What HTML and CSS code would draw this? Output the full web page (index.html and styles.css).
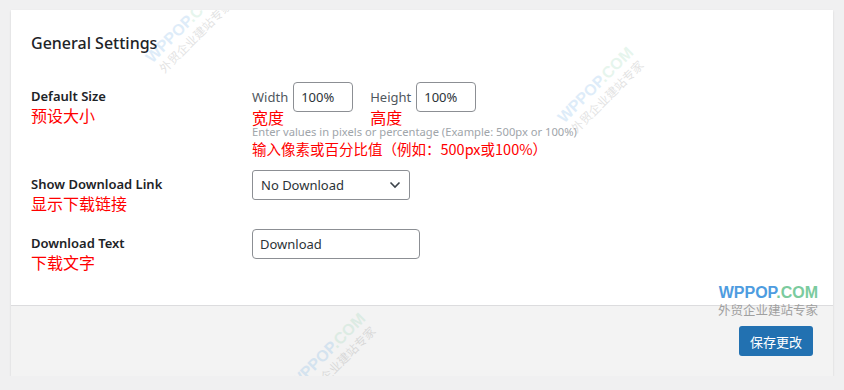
FILE: index.html
```html
<!DOCTYPE html>
<html lang="zh-CN">
<head>
<meta charset="utf-8">
<title>General Settings</title>
<link rel="stylesheet" href="styles.css">
</head>
<body>
<div class="card">
  <div class="card-body">
    <h2 class="title">General Settings</h2>
    <div class="form">
      <div class="row row-size">
        <div class="label">Default Size<span class="cn cn-label">预设大小</span></div>
        <div class="field">
          <div class="dims">
            <div class="dim">
              <div class="dim-label">Width<span class="cn cn-dim">宽度</span></div>
              <input class="input input-dim" type="text" value="100%">
            </div>
            <div class="dim">
              <div class="dim-label">Height<span class="cn cn-dim">高度</span></div>
              <input class="input input-dim" type="text" value="100%">
            </div>
          </div>
          <p class="desc">Enter values in pixels or percentage (Example: 500px or 100%)</p>
          <p class="cn cn-desc">输入像素或百分比值（例如：500px或100%）</p>
        </div>
      </div>
      <div class="row row-link">
        <div class="label">Show Download Link<span class="cn cn-label">显示下载链接</span></div>
        <div class="field">
          <div class="select">
            <span>No Download</span>
            <svg class="chev" width="12" height="8" viewBox="0 0 12 8"><path d="M1.5 1.5 L6 6 L10.5 1.5" fill="none" stroke="#3c434a" stroke-width="1.6"/></svg>
          </div>
        </div>
      </div>
      <div class="row row-text">
        <div class="label">Download Text<span class="cn cn-label">下载文字</span></div>
        <div class="field">
          <input class="input input-text" type="text" value="Download">
        </div>
      </div>
    </div>
    <div class="brand">
      <div class="brand-name"><span class="b-wp">WPPOP</span><span class="b-com">.COM</span></div>
    </div>
  </div>
  <div class="card-foot">
    <div class="brand-sub">外贸企业建站专家</div>
    <button class="btn" type="button">保存更改</button>
  </div>
  <div class="wm wm1"><div class="wm-name"><span class="b-wp">WPPOP</span><span class="b-com">.COM</span></div><div class="wm-sub">外贸企业建站专家</div></div>
  <div class="wm wm2"><div class="wm-name"><span class="b-wp">WPPOP</span><span class="b-com">.COM</span></div><div class="wm-sub">外贸企业建站专家</div></div>
  <div class="wm wm3"><div class="wm-name"><span class="b-wp">WPPOP</span><span class="b-com">.COM</span></div><div class="wm-sub">外贸企业建站专家</div></div>
</div>
</body>
</html>
```
FILE: styles.css
```css
* { box-sizing: border-box; }
html, body { margin: 0; }
body {
  background: #f0f0f1;
  padding: 10px 11px 0;
  font-family: "Noto Sans", "Noto Sans CJK SC", sans-serif;
  color: #1d2327;
  font-size: 14px;
}
.card {
  position: relative;
  background: #fff;
  box-shadow: 0 1px 2px rgba(0,0,0,0.12);
  overflow: hidden;
  height: 366px;
  display: flex;
  flex-direction: column;
}
.card-body {
  padding: 21px 20px 0;
  height: 295px;
  position: relative;
}
.title {
  margin: 0;
  font-size: 16px;
  font-weight: 500;
  line-height: 24px;
  color: #1d2327;
}
.form { margin-top: 27px; }
.row { display: flex; }
.label {
  width: 221px;
  flex: none;
  display: flex;
  flex-direction: column;
  font-size: 13px;
  font-weight: 600;
  line-height: 18px;
  padding-top: 5px;
  color: #1d2327;
}
.cn { font-family: "Noto Sans CJK SC", sans-serif; color: #ff0000; font-weight: 400; }
.cn-label { font-size: 16px; line-height: 20px; margin-top: 0; }
.field { display: flex; flex-direction: column; }
.dims { display: flex; gap: 17px; }
.dim { display: flex; align-items: flex-start; gap: 5px; }
.dim-label {
  display: flex;
  flex-direction: column;
  font-size: 13px;
  line-height: 30px;
  color: #50575e;
}
.cn-dim { font-size: 16px; line-height: 16px; margin-top: -3px; }
.input {
  font-family: inherit;
  font-size: 13px;
  color: #2c3338;
  border: 1px solid #8c8f94;
  border-radius: 4px;
  height: 30px;
  padding: 0 7px;
  background: #fff;
  outline: none;
}
.input-dim { width: 60px; }
.input-text { width: 168px; }
.desc {
  margin: 0;
  font-size: 11.2px;
  line-height: 14px;
  color: #a0a5aa;
}
.cn-desc { margin: 0; font-size: 14.5px; line-height: 20px; }
.row-link { margin-top: 11px; }
.row-text { margin-top: 16px; }
.select {
  width: 158px;
  height: 30px;
  border: 1px solid #8c8f94;
  border-radius: 3px;
  display: flex;
  align-items: center;
  justify-content: space-between;
  padding: 0 8px 0 8px;
  font-size: 13px;
  color: #2c3338;
}
.chev { display: block; }
.brand {
  position: absolute;
  right: 15px;
  bottom: 3px;
}
.brand-name, .wm-name {
  font-family: "Liberation Sans", Arial, sans-serif;
  font-weight: 700;
  font-size: 16px;
  line-height: 18px;
}
.b-wp { color: #4e9ce0; }
.b-com { color: #7bcb9e; }
.card-foot {
  flex: 1;
  background: #f3f3f3;
  border-top: 1px solid #dcdcde;
  display: flex;
  flex-direction: column;
  align-items: flex-end;
  padding: 0 20px 0 0;
}
.brand-sub {
  font-family: "Noto Sans CJK SC", sans-serif;
  color: #a0a0a0;
  font-size: 12.5px;
  line-height: 18px;
  margin-right: -5px;
  margin-top: -5px;
}
.btn {
  margin-top: 7px;
  font-family: "Noto Sans CJK SC", sans-serif;
  background: #2271b1;
  color: #fff;
  border: none;
  border-radius: 3px;
  height: 30px;
  padding: 0 11px;
  font-size: 13px;
}
.wm {
  position: absolute;
  transform: rotate(-45deg);
  opacity: 0.18;
  text-align: center;
  pointer-events: none;
}
.wm-sub {
  font-family: "Noto Sans CJK SC", sans-serif;
  color: #666;
  font-size: 12px;
  line-height: 14px;
}
.wm1 { left: 128px; top: 4px; }
.wm2 { left: 540px; top: 64px; }
.wm3 { left: 272px; top: 330px; }
```
